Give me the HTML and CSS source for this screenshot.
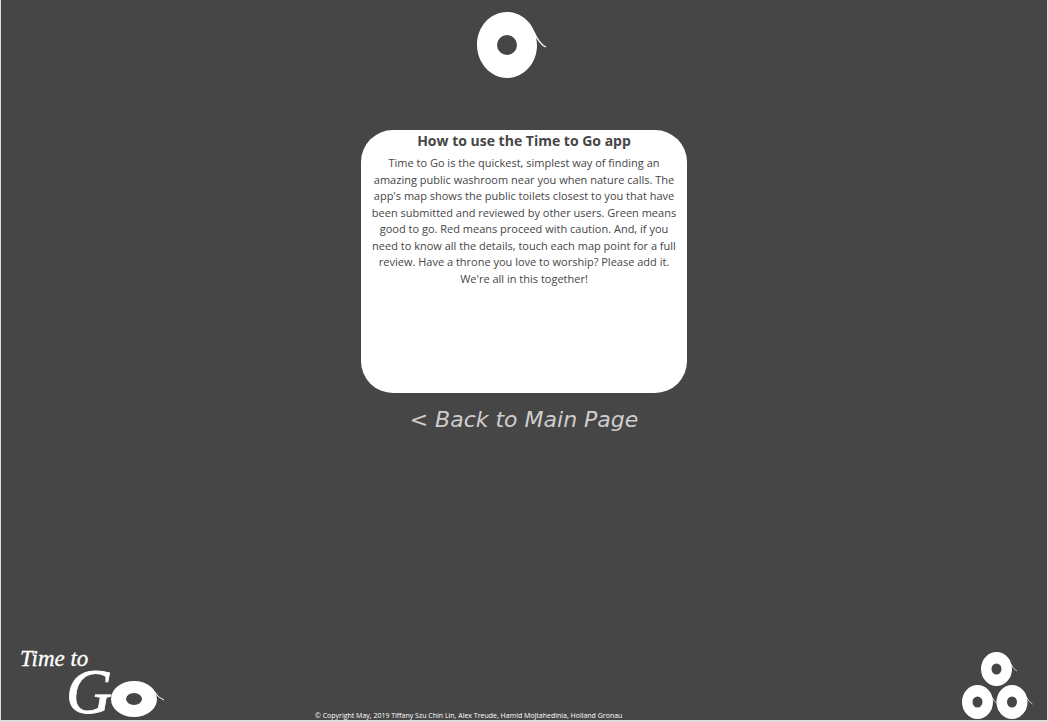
FILE: index.html
```html
<!DOCTYPE html>
<html lang="en">
<head>
<meta charset="utf-8">
<meta name="viewport" content="width=device-width, initial-scale=1">
<title>Time to Go</title>
<link rel="stylesheet" href="styles.css">
</head>
<body>
<header class="header">
  <svg class="roll" viewBox="0 0 72 68" aria-hidden="true">
    <path fill="#fff" fill-rule="evenodd" d="M31 1C47 1 61 15 61 34S47 67 31 67 1 52 1 34 14 1 31 1ZM31 24a10 10 0 1 0 0 20a10 10 0 1 0 0-20Z"/>
    <path fill="none" stroke="#fff" stroke-width="1.3" d="M58 21C61 28 65 34 70 36"/>
  </svg>
</header>
<main class="main">
  <section class="card">
    <h1 class="card-title">How to use the Time to Go app</h1>
    <p class="card-text">Time to Go is the quickest, simplest way of finding an amazing public washroom near you when nature calls. The app's map shows the public toilets closest to you that have been submitted and reviewed by other users. Green means good to go. Red means proceed with caution. And, if you need to know all the details, touch each map point for a full review. Have a throne you love to worship? Please add it. We're all in this together!</p>
  </section>
  <a class="back" href="#">&lt; Back to Main Page</a>
</main>
<footer class="footer">
  <svg class="logo" viewBox="0 0 148 74" role="img" aria-label="Time to Go">
    <text class="logo-time" x="2" y="20">Time to</text>
    <text class="logo-g" x="48" y="67">G</text>
    <path fill="#fff" fill-rule="evenodd" d="M116 35a23 18 0 1 0 0 36a23 18 0 1 0 0-36ZM116 47a8 6 0 1 1 0 12a8 6 0 1 1 0-12Z"/>
    <path fill="none" stroke="#fff" d="M137 46Q140 52 146 54"/>
  </svg>
  <p class="copyright">© Copyright May, 2019 Tiffany Szu Chin Lin, Alex Treude, Hamid Mojtahedinia, Holland Gronau</p>
  <svg class="stack" viewBox="0 0 72 68" aria-hidden="true">
    <defs>
      <g id="small-roll">
        <path fill="#fff" fill-rule="evenodd" d="M15.5 0a15.5 17 0 1 0 0 34a15.5 17 0 1 0 0-34ZM15.5 11.5a5 5.5 0 1 1 0 11a5 5.5 0 1 1 0-11Z"/>
        <path fill="none" stroke="#fff" stroke-width=".7" d="M30 12Q32 17 36 19"/>
      </g>
    </defs>
    <use href="#small-roll" x="19" y="0"/>
    <use href="#small-roll" x="0" y="33"/>
    <use href="#small-roll" x="34.5" y="33"/>
  </svg>
</footer>
</body>
</html>
```
FILE: styles.css
```css
* {
  box-sizing: border-box;
}

body {
  display: flex;
  flex-direction: column;
  min-height: 100vh;
  margin: 0;
  border: solid #dedcdc;
  border-width: 0 1px 2px;
  background: #464646;
  color: #464646;
  font-family: "Open Sans", "Noto Sans", sans-serif;
}

.header {
  display: flex;
  justify-content: center;
  padding: 11px 0 51px;
}

.roll {
  width: 72px;
  height: 68px;
  margin-right: 25px;
}

.main {
  display: flex;
  flex: 1;
  flex-direction: column;
  align-items: center;
}

.card {
  width: 326px;
  max-width: 100%;
  min-height: 263px;
  padding: 0 8px;
  border-radius: 32px;
  background: #fff;
  text-align: center;
}

.card-title {
  margin: 0;
  font-size: 14px;
  line-height: 22px;
}

.card-text {
  margin: 3px 0 0;
  font-size: 11px;
  line-height: 1.5;
}

.back {
  margin-top: 12px;
  color: #cfcdcd;
  font-family: "DejaVu Sans", sans-serif;
  font-size: 22px;
  font-style: italic;
  line-height: 30px;
  text-decoration: none;
}

.footer {
  display: flex;
  align-items: flex-end;
  padding: 0 13px 0 17px;
}

.logo {
  width: 148px;
  height: 74px;
  overflow: visible;
}

.logo-time,
.logo-g {
  fill: #fff;
  stroke: #fff;
  font-family: "Liberation Serif", serif;
  font-style: italic;
}

.logo-time {
  font-size: 23px;
  stroke-width: 0.3px;
}

.logo-g {
  font-size: 64px;
  stroke-width: 0.8px;
}

.copyright {
  margin: 0 auto 0 149px;
  color: #fff;
  font-size: 7px;
  line-height: 8px;
}

.stack {
  width: 72px;
  height: 68px;
}
```
